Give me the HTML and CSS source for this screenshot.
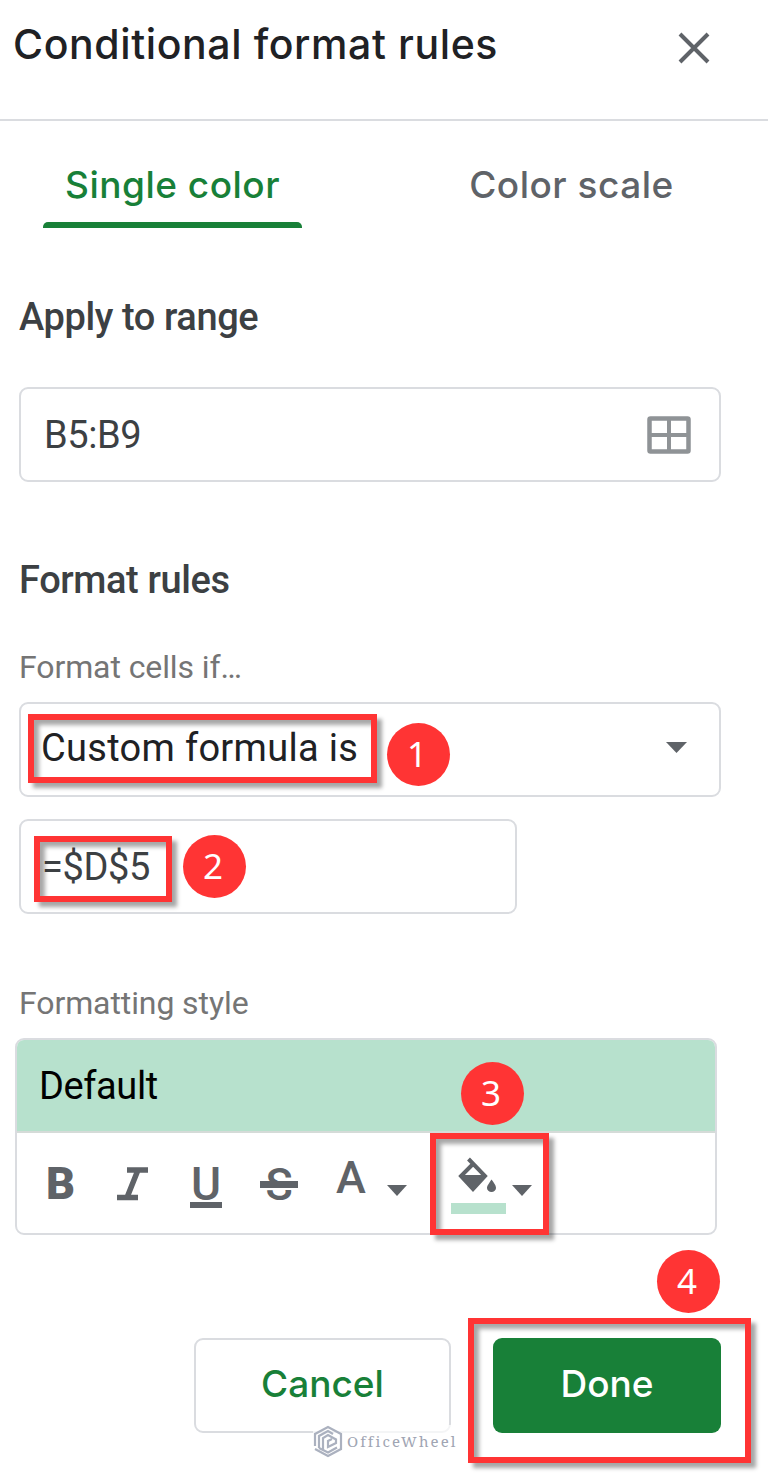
FILE: index.html
```html
<!DOCTYPE html>
<html lang="en">
<head>
  <meta charset="UTF-8">
  <meta name="viewport" content="width=device-width, initial-scale=1.0">
  <title>Conditional format rules</title>
  <link rel="stylesheet" href="styles.css">
</head>
<body>
  <div class="sidebar">
    <header class="header">
      <h1>Conditional format rules</h1>
      <svg class="close" width="32" height="32" viewBox="0 0 32 32">
        <path d="M2 2L30 30M30 2L2 30" stroke="#5f6368" stroke-width="4" fill="none"/>
      </svg>
    </header>

    <nav class="tabs">
      <div class="tab active">Single color</div>
      <div class="tab">Color scale</div>
    </nav>

    <section class="range">
      <h2>Apply to range</h2>
      <div class="field">
        <span>B5:B9</span>
        <svg class="grid-icon" width="44" height="38" viewBox="0 0 44 38">
          <rect x="2.500" y="2.500" width="39" height="33" rx="1" fill="none" stroke="#8f9396" stroke-width="4.500"/>
          <path d="M22 2V36M2 19H42" stroke="#8f9396" stroke-width="4"/>
        </svg>
      </div>
    </section>

    <section class="rules">
      <h2>Format rules</h2>
      <div class="label">Format cells if…</div>
      <div class="field select">
        <span>Custom formula is</span>
        <svg class="caret" width="21" height="11" viewBox="0 0 21 11"><path d="M0 0H21L10.500 11Z" fill="#5f6368"/></svg>
        <div class="highlight highlight-1"></div>
        <div class="badge badge-1">1</div>
      </div>
      <div class="field formula">
        <span>=$D$5</span>
        <div class="highlight highlight-2"></div>
        <div class="badge badge-2">2</div>
      </div>
    </section>

    <section class="style">
      <div class="label">Formatting style</div>
      <div class="style-box">
        <div class="preview">Default</div>
        <div class="toolbar">
          <span class="tool bold">B</span>
          <svg class="tool italic" width="34" height="34" viewBox="0 0 34 34">
            <path d="M11 3H32M1 30.500H22M22 3L11 30.500" fill="none" stroke="#5f6368" stroke-width="5.500"/>
          </svg>
          <span class="tool underline">U</span>
          <span class="tool strike">S</span>
          <span class="tool text-color">A</span>
          <svg class="tool-caret" width="20" height="11" viewBox="0 0 20 11"><path d="M0 0H20L10 11Z" fill="#5f6368"/></svg>
          <div class="fill-color">
            <svg width="40" height="36" viewBox="0 0 40 36">
              <path d="M10.500 2L27 19L15 32L3 19L15.500 6.500" fill="none" stroke="#5f6368" stroke-width="4"/>
              <path d="M2 18H28L15 33.500Z" fill="#5f6368"/>
              <path d="M33.500 22.500C37 27 38 29 38 31A4.500 4 0 0 1 29 31C29 29 30.500 27 33.500 22.500Z" fill="#5f6368"/>
            </svg>
            <div class="swatch"></div>
          </div>
          <svg class="tool-caret fill-caret" width="20" height="11" viewBox="0 0 20 11"><path d="M0 0H20L10 11Z" fill="#5f6368"/></svg>
        </div>
        <div class="highlight highlight-3"></div>
        <div class="badge badge-3">3</div>
      </div>
    </section>

    <footer class="actions">
      <div class="btn cancel">Cancel</div>
      <div class="btn done">Done</div>
      <div class="highlight highlight-4"></div>
      <div class="badge badge-4">4</div>
      <div class="watermark">
        <svg width="30" height="33" viewBox="0 0 30 33">
          <g fill="none" stroke="#abb1bf" stroke-width="2.200">
            <path d="M2 21V9L15 2L28 9V24L15 31L2 24"/>
            <path d="M6 23V11L15 6L20 9M10 25V13L15 10L23 14.500V18L15 22V16L19 14"/>
            <path d="M6 23L15 27.500L24 22.500"/>
          </g>
        </svg>
        <span>OfficeWheel</span>
      </div>
    </footer>
  </div>
</body>
</html>
```
FILE: styles.css
```css
* {
  box-sizing: border-box;
}
body {
  margin: 0;
  background-color: #fff;
  font-family: Roboto, sans-serif;
  color: #3c4043;
}
.sidebar {
  width: 768px;
  height: 1480px;
  overflow: hidden;
}
h1, h2 {
  margin: 0;
  font-weight: 500;
  white-space: nowrap;
}
.header {
  display: flex;
  justify-content: space-between;
  height: 121px;
  padding: 19px 58px 0 13px;
  border-bottom: 2px solid #dadce0;
}
h1 {
  font-family: Inter, sans-serif;
  font-size: 41px;
  line-height: 50px;
  letter-spacing: 0.6px;
  color: #202124;
}
.close {
  margin-top: 13px;
}
.tabs {
  display: flex;
  gap: 140px;
  height: 107px;
  padding-left: 43px;
}
.tab {
  position: relative;
  width: 259px;
  padding-top: 39px;
  font-family: Inter, sans-serif;
  font-size: 37px;
  font-weight: 500;
  line-height: 50px;
  letter-spacing: 0.5px;
  text-align: center;
  white-space: nowrap;
  color: #5f6368;
}
.tab.active {
  color: #188038;
}
.tab.active::after {
  content: "";
  position: absolute;
  left: 0;
  right: 0;
  bottom: 0;
  height: 6px;
  border-radius: 5px 5px 0 0;
  background-color: #188038;
}
h2 {
  font-size: 38px;
  line-height: 46px;
  letter-spacing: -0.4px;
}
.range {
  padding: 66px 0 0 19px;
}
.field {
  position: relative;
  display: flex;
  align-items: center;
  justify-content: space-between;
  width: 702px;
  height: 95px;
  padding: 0 28px 0 23px;
  border: 2px solid #dadce0;
  border-radius: 9px;
  font-size: 38px;
  letter-spacing: -0.4px;
  white-space: nowrap;
}
.range .field {
  margin-top: 47px;
}
.rules {
  padding: 75px 0 0 19px;
}
.label {
  font-size: 32px;
  line-height: 40px;
  letter-spacing: -0.1px;
  color: #757575;
  white-space: nowrap;
}
.rules .label {
  margin-top: 44px;
}
.select {
  margin-top: 15px;
  padding: 0 32px 4px 20px;
  letter-spacing: 0.3px;
  color: #202124;
}
.formula {
  width: 498px;
  margin-top: 22px;
  padding-left: 21px;
}
.style {
  padding: 69px 0 0 15px;
}
.style .label {
  padding-left: 4px;
}
.style-box {
  position: relative;
  width: 702px;
  height: 197px;
  margin-top: 15px;
  border: 2px solid #dadce0;
  border-radius: 9px;
}
.preview {
  height: 93px;
  padding: 22px 0 0 22px;
  background-color: #b7e1cd;
  border-bottom: 2px solid #d5dbd8;
  border-radius: 7px 7px 0 0;
  font-size: 38px;
  line-height: 48px;
  letter-spacing: -0.4px;
  color: #000;
}
.toolbar {
  display: flex;
  align-items: flex-start;
  height: 100px;
  padding-left: 29px;
  color: #5f6368;
}
.tool {
  font-size: 45px;
  line-height: 45px;
  font-weight: 500;
}
.bold {
  width: 70px;
  margin-top: 28px;
  font-weight: 900;
}
.italic {
  margin: 34px 0 0 0;
}
.underline {
  width: 32px;
  height: 46px;
  margin: 29px 0 0 40px;
  border-bottom: 6px solid #5f6368;
  font-size: 46px;
  line-height: 44px;
  text-align: center;
}
.strike {
  position: relative;
  width: 38px;
  margin: 29px 0 0 38px;
  text-align: center;
}
.strike::after {
  content: "";
  position: absolute;
  left: 0;
  top: 19px;
  width: 38px;
  height: 7px;
  background-color: #5f6368;
  border-bottom: 2px solid #fff;
}
.text-color {
  width: 30px;
  margin: 22px 0 0 38px;
  text-align: center;
}
.tool-caret {
  margin: 52px 0 0 21px;
}
.fill-color {
  width: 55px;
  margin: 24px 0 0 44px;
}
.fill-color svg {
  display: block;
  margin-left: 7px;
}
.swatch {
  height: 11px;
  margin-top: 10px;
  background-color: #b7e1cd;
}
.fill-caret {
  margin-left: 6px;
}
.actions {
  position: relative;
  display: flex;
  gap: 42px;
  padding: 103px 0 0 194px;
}
.btn {
  display: flex;
  align-items: center;
  justify-content: center;
  height: 95px;
  padding-bottom: 4px;
  border-radius: 9px;
  font-family: Inter, sans-serif;
  font-size: 37px;
  font-weight: 500;
  white-space: nowrap;
}
.cancel {
  width: 257px;
  border: 2px solid #dadce0;
  color: #188038;
}
.done {
  width: 228px;
  background-color: #188038;
  color: #fff;
}

/* Step annotations */
.highlight {
  position: absolute;
  border: 6px solid #ff3434;
  box-shadow: 5px 5px 4px rgba(0,0,0,0.35), inset 5px 5px 4px rgba(0,0,0,0.35);
}
.highlight-1 {
  left: 7px;
  top: 10px;
  width: 349px;
  height: 69px;
}
.highlight-2 {
  left: 13px;
  top: 15px;
  width: 138px;
  height: 66px;
}
.highlight-3 {
  left: 413px;
  top: 93px;
  width: 119px;
  height: 102px;
}
.highlight-4 {
  left: 468px;
  top: 83px;
  width: 283px;
  height: 145px;
}
.badge {
  position: absolute;
  width: 63px;
  height: 63px;
  padding-right: 3px;
  border-radius: 50%;
  background-color: #ff3434;
  color: #fff;
  font-family: "Noto Sans", sans-serif;
  font-size: 35px;
  line-height: 61px;
  letter-spacing: 0;
  text-align: center;
}
.badge-1 {
  left: 366px;
  top: 19px;
}
.badge-2 {
  left: 162px;
  top: 14px;
}
.badge-3 {
  left: 444px;
  top: 22px;
}
.badge-4 {
  left: 657px;
  top: 15px;
}
.watermark {
  position: absolute;
  left: 313px;
  top: 190px;
  display: flex;
  align-items: center;
  background-color: rgba(255,255,255,0.7);
  font-family: "Noto Serif", "Liberation Serif", serif;
  font-size: 15px;
  letter-spacing: 2.1px;
  color: #a0a5b3;
}
.watermark span {
  margin: -2px 0 0 4px;
}
```
